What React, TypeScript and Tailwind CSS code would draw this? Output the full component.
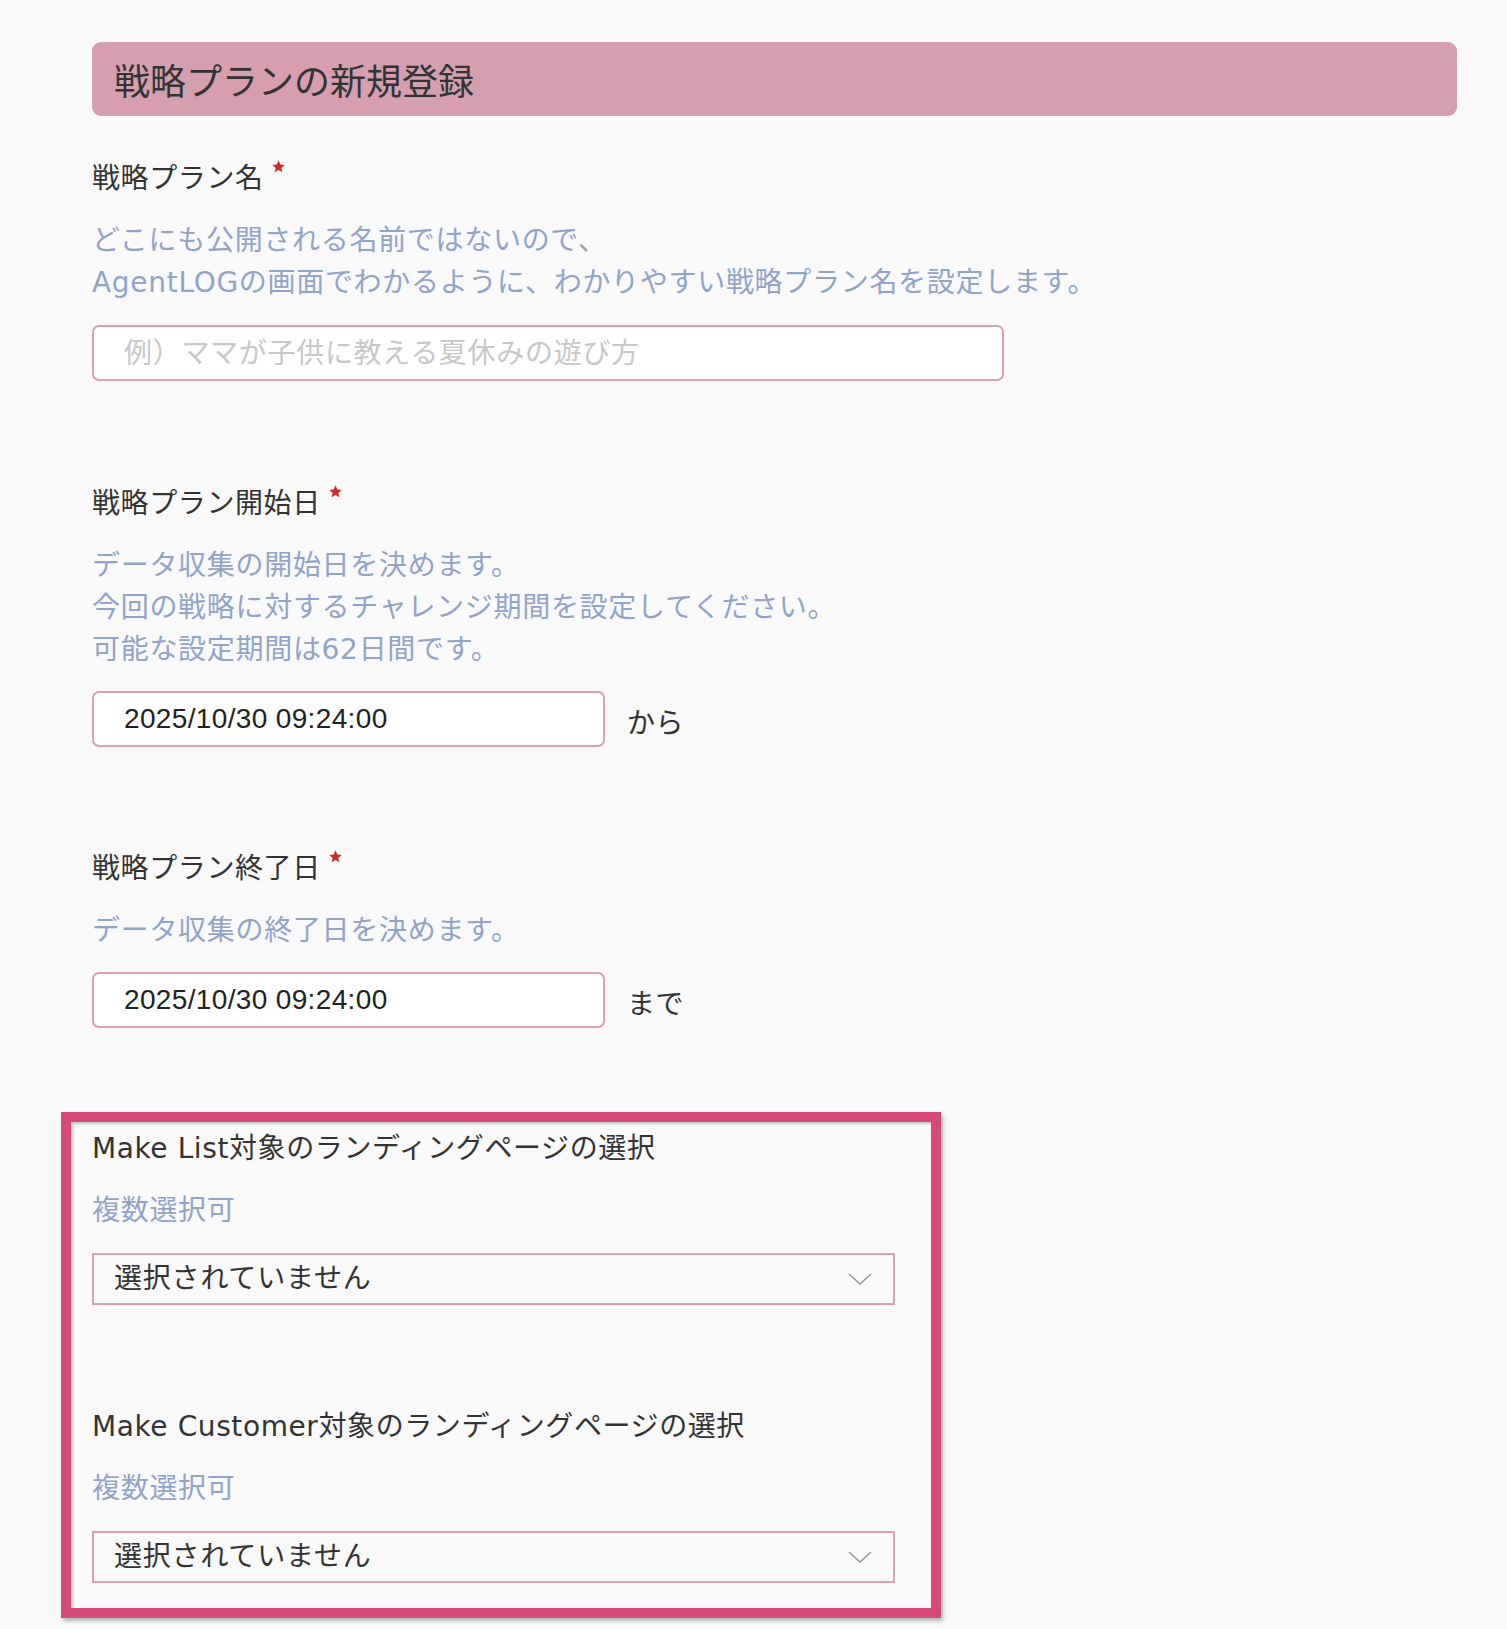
import React from "react";

const font = "font-['DejaVu_Sans','Noto_Sans_CJK_JP',sans-serif]";

const Star: React.FC = () => (
  <svg
    viewBox="0 0 24 24"
    className="ml-[7px] mt-[1px] inline-block h-[15px] w-[15px] align-top"
  >
    <path
      d="M12 2l2.9 6.9 7.1.6-5.4 4.7 1.6 7.1L12 17.6 5.8 21.3l1.6-7.1L2 9.5l7.1-.6z"
      fill="#c9302c"
    />
  </svg>
);

const Label: React.FC<{ text: string; required?: boolean }> = ({
  text,
  required,
}) => (
  <div className="flex items-start text-[28px] leading-[42px] tracking-[0.6px] text-[#333]">
    <span>{text}</span>
    {required && <Star />}
  </div>
);

const Hint: React.FC<{ lines: string[] }> = ({ lines }) => (
  <div className="mt-[20px] text-[28px] leading-[42px] tracking-[0.7px] text-[#91a4c6]">
    {lines.map((l) => (
      <div key={l}>{l}</div>
    ))}
  </div>
);

const DateField: React.FC<{ value: string; suffix: string }> = ({
  value,
  suffix,
}) => (
  <div className="mt-[20px] flex items-center">
    <div className="flex h-[56px] w-[513px] items-center rounded-[7px] border-2 border-[#d8a2b3] bg-white pl-[30px] font-['Liberation_Sans',sans-serif] text-[28px] tracking-[0.35px] text-[#222]">
      {value}
    </div>
    <span className="ml-[22px] mt-[10px] text-[28px] tracking-[0.6px] text-[#333]">
      {suffix}
    </span>
  </div>
);

const Select: React.FC = () => (
  <div className="mt-[21px] flex h-[52px] w-[803px] items-center justify-between border-2 border-[#d8a2b3] bg-[#f9f9f9] pl-[20px] pr-[21px]">
    <span className="text-[28px] tracking-[0.8px] text-[#333]">
      選択されていません
    </span>
    <svg viewBox="0 0 24 12" className="h-[12px] w-[24px]">
      <path d="M1 1l11 10L23 1" fill="none" stroke="#9a9a9a" strokeWidth="1.6" />
    </svg>
  </div>
);

export default function App() {
  return (
    <div
      className={`${font} min-h-[1629px] w-full bg-[#f9f9f9] pl-[92px] pr-[50px] pt-[42px]`}
    >
      <div className="flex h-[74px] items-center rounded-[9px] bg-[#d59fb0] pl-[22px] font-['Noto_Sans_CJK_JP',sans-serif] text-[36px] text-[#333]">
        戦略プランの新規登録
      </div>

      <div className="mt-[42px]">
        <Label text="戦略プラン名" required />
        <Hint
          lines={[
            "どこにも公開される名前ではないので、",
            "AgentLOGの画面でわかるように、わかりやすい戦略プラン名を設定します。",
          ]}
        />
        <input
          className="mt-[21px] h-[56px] w-[912px] rounded-[7px] border-2 border-[#d8a2b3] bg-white pl-[30px] text-[28px] tracking-[0.7px] text-[#333] outline-none placeholder:text-[#c8c8c8]"
          placeholder="例）ママが子供に教える夏休みの遊び方"
        />
      </div>

      <div className="mt-[102px]">
        <Label text="戦略プラン開始日" required />
        <Hint
          lines={[
            "データ収集の開始日を決めます。",
            "今回の戦略に対するチャレンジ期間を設定してください。",
            "可能な設定期間は62日間です。",
          ]}
        />
        <DateField value="2025/10/30 09:24:00" suffix="から" />
      </div>

      <div className="mt-[101px]">
        <Label text="戦略プラン終了日" required />
        <Hint lines={["データ収集の終了日を決めます。"]} />
        <DateField value="2025/10/30 09:24:00" suffix="まで" />
      </div>

      <div className="-ml-[31px] mt-[84px] w-[880px] border-[10px] border-[#d54a7b] pb-[25px] pl-[21px] pt-[6px] shadow-[inset_2px_2px_3px_rgba(0,0,0,0.22),2px_3px_4px_rgba(0,0,0,0.28)]">
        <Label text="Make List対象のランディングページの選択" />
        <Hint lines={["複数選択可"]} />
        <Select />
        <div className="mt-[101px]">
          <Label text="Make Customer対象のランディングページの選択" />
          <Hint lines={["複数選択可"]} />
          <Select />
        </div>
      </div>
    </div>
  );
}
